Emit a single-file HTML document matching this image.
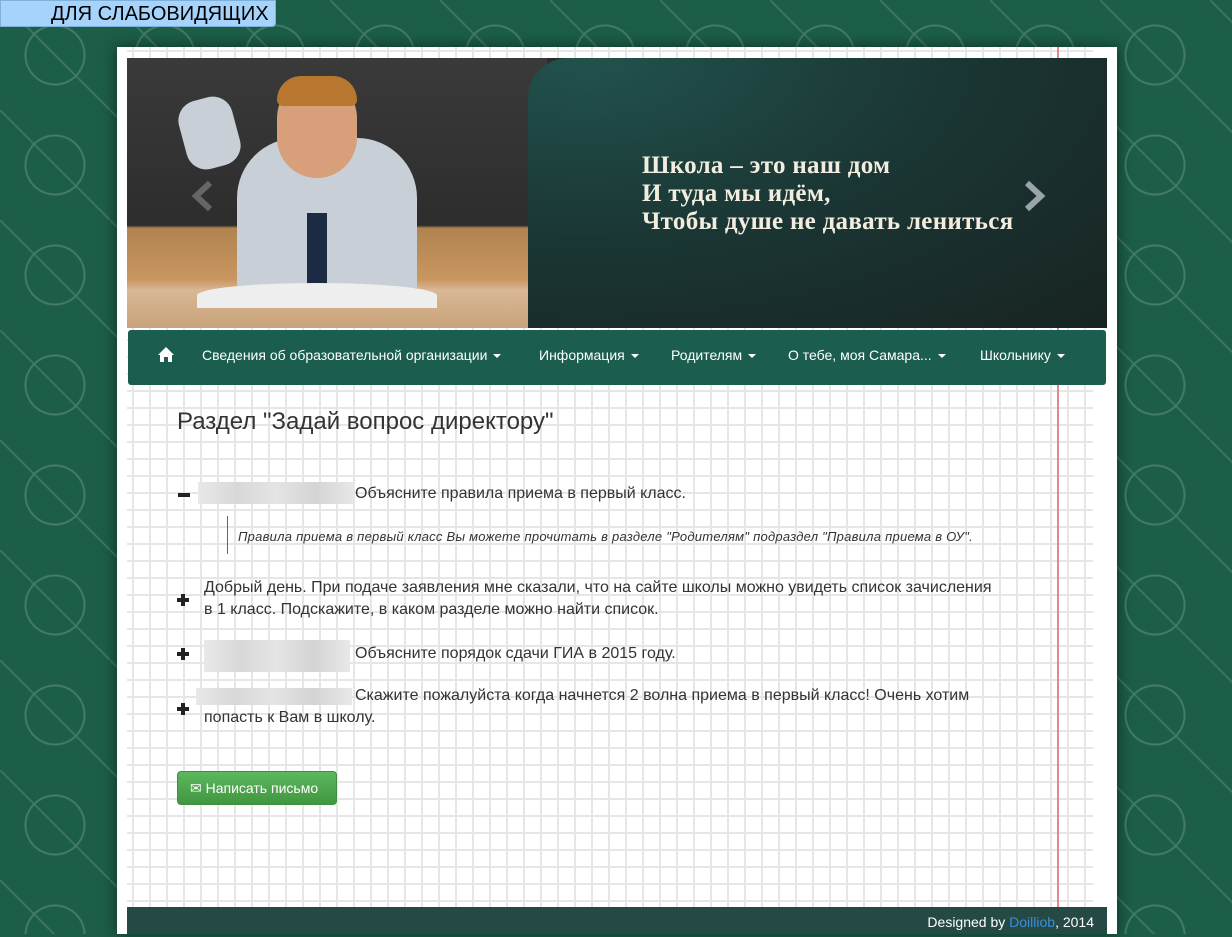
<!DOCTYPE html>
<html><head><meta charset="utf-8"><style>
*{box-sizing:border-box;margin:0;padding:0}
body{width:1232px;height:934px;overflow:hidden;position:relative;font-family:"Liberation Sans",sans-serif;
background:#1c5e48;}
.bgpat{position:absolute;inset:0;opacity:.18;
background-image:radial-gradient(circle at 50% 50%,transparent 28px,#fff 29px,#fff 30px,transparent 31px),linear-gradient(45deg,transparent 49%,#fff 50%,transparent 51%);
background-size:110px 110px,110px 110px;}
.blind{position:absolute;left:0;top:0;width:276px;height:27px;background:#a6d3fb;border:1px solid #7fb0d8;border-radius:0 0 4px 0;font-size:20px;color:#000;padding-left:50px;line-height:27px}
.panel{position:absolute;left:117px;top:47px;width:1000px;height:887px;background:#fff;box-shadow:0 0 14px rgba(0,0,0,.5)}
.grid{position:absolute;left:127px;top:47px;width:966px;height:887px;
background-color:#fff;
background-image:linear-gradient(#e6e6e6 2px,transparent 2px),linear-gradient(90deg,#e6e6e6 2px,transparent 2px);
background-size:17px 17px;background-position:5px 3px}
.redline{position:absolute;left:1057px;top:47px;width:2px;height:860px;background:#e08a8a}
.banner{position:absolute;left:127px;top:58px;width:980px;height:270px;overflow:hidden;background:#2b2b2b}
.photo{position:absolute;left:0;top:0;width:420px;height:270px;background:linear-gradient(#3a3a3a,#2d2d2d 62%,#b08350 63%,#c99660 82%,#d9b895 86%,#c8a27a)}
.right{position:absolute;left:401px;top:0;width:600px;height:270px;border-radius:40px 0 0 0;
background:radial-gradient(ellipse at 10% 0%,#22524d 0%,#1a3533 50%,#182322 100%)}
.poem{position:absolute;left:515px;top:94px;color:#f3ede0;font-family:"Liberation Serif",serif;font-weight:bold;font-size:25px;line-height:28px;letter-spacing:.3px}
.nav{position:absolute;left:128px;top:330px;width:978px;height:55px;background:#1b5e4f;border-radius:3px;color:#fff;font-size:14px}
.nav span{position:absolute;top:17px}
.car{display:inline-block;border-left:4px solid transparent;border-right:4px solid transparent;border-top:4px solid #fff;vertical-align:middle;margin-left:6px}
h1{position:absolute;left:177px;top:408px;font-weight:normal;font-size:24px;color:#333}
.t{position:absolute;font-size:16px;color:#333;line-height:22px}
.blur{position:absolute;background:linear-gradient(90deg,#e8e8e8,#d8d8d8,#e4e4e4,#d4d4d4,#e8e8e8)}
.pm{position:absolute;width:12px;height:12px}
.pm:before{content:"";position:absolute;left:0;top:4px;width:12px;height:4px;background:#222}
.pm.p:after{content:"";position:absolute;left:4px;top:0;width:4px;height:12px;background:#222}
.btn{position:absolute;left:177px;top:771px;width:160px;height:34px;background:linear-gradient(#5cb85c,#419641);border:1px solid #3e8f3e;border-radius:4px;color:#fff;font-size:14px;line-height:32px;padding-left:12px}
.foot{position:absolute;left:127px;top:907px;width:980px;height:27px;background:#254a46;color:#fff;font-size:14px;text-align:right;padding-right:13px;line-height:30px}
</style></head><body>
<div class="bgpat"></div>
<div class="blind">ДЛЯ СЛАБОВИДЯЩИХ</div>
<div class="panel"></div>
<div class="grid"></div>
<div class="redline"></div>
<div class="banner">
 <div class="photo">
  <div style="position:absolute;left:110px;top:80px;width:180px;height:150px;background:#c9cfd6;border-radius:60px 60px 0 0"></div>
  <div style="position:absolute;left:55px;top:40px;width:55px;height:70px;background:#c9cfd6;border-radius:20px;transform:rotate(-15deg)"></div>
  <div style="position:absolute;left:150px;top:20px;width:80px;height:100px;background:#d7a07a;border-radius:40px"></div>
  <div style="position:absolute;left:150px;top:18px;width:80px;height:30px;background:#b7772e;border-radius:40px 40px 10px 10px"></div>
  <div style="position:absolute;left:180px;top:155px;width:20px;height:75px;background:#1d2a44"></div>
  <div style="position:absolute;left:70px;top:225px;width:240px;height:25px;background:#eee;border-radius:50% 50% 0 0"></div>
 </div>
 <div class="right"></div>
 <div class="poem">Школа – это наш дом<br>И туда мы идём,<br>Чтобы душе не давать лениться</div>
 <svg style="position:absolute;left:897px;top:122px" width="22" height="32" viewBox="0 0 22 32"><path d="M3 3 L17 16 L3 29" fill="none" stroke="#9aa4ab" stroke-width="6"/></svg>
 <svg style="position:absolute;left:64px;top:122px" width="22" height="32" viewBox="0 0 22 32"><path d="M19 3 L5 16 L19 29" fill="none" stroke="#8a8a8a" stroke-width="6" opacity=".6"/></svg>
</div>
<div class="nav">
 <svg style="position:absolute;left:30px;top:17px" width="16" height="15" viewBox="0 0 16 15"><path d="M8 0 L16 8 L14 8 L14 15 L10 15 L10 10 L6 10 L6 15 L2 15 L2 8 L0 8 Z" fill="#fff"/></svg>
 <span style="left:74px">Сведения об образовательной организации<i class="car"></i></span>
 <span style="left:411px">Информация<i class="car"></i></span>
 <span style="left:543px">Родителям<i class="car"></i></span>
 <span style="left:660px">О тебе, моя Самара...<i class="car"></i></span>
 <span style="left:852px">Школьнику<i class="car"></i></span>
</div>
<h1>Раздел "Задай вопрос директору"</h1>
<div class="pm" style="left:178px;top:489px"></div>
<div class="blur" style="left:198px;top:482px;width:157px;height:22px"></div>
<div class="t" style="left:355px;top:483px">Объясните правила приема в первый класс.</div>
<div style="position:absolute;left:227px;top:516px;width:1px;height:38px;background:#666"></div>
<div class="t" style="left:238px;top:526px;font-size:13px;font-style:italic;letter-spacing:.25px">Правила приема в первый класс Вы можете прочитать в разделе "Родителям" подраздел "Правила приема в ОУ".</div>
<div class="pm p" style="left:177px;top:594px"></div>
<div class="t" style="left:204px;top:577px">Добрый день. При подаче заявления мне сказали, что на сайте школы можно увидеть список зачисления<br>в 1 класс. Подскажите, в каком разделе можно найти список.</div>
<div class="pm p" style="left:177px;top:648px"></div>
<div class="blur" style="left:204px;top:640px;width:146px;height:32px"></div>
<div class="t" style="left:355px;top:643px">Объясните порядок сдачи ГИА в 2015 году.</div>
<div class="pm p" style="left:177px;top:703px"></div>
<div class="blur" style="left:196px;top:688px;width:156px;height:17px"></div>
<div class="t" style="left:355px;top:685px">Скажите пожалуйста когда начнется 2 волна приема в первый класс! Очень хотим</div>
<div class="t" style="left:204px;top:707px">попасть к Вам в школу.</div>
<div class="btn">&#x2709; Написать письмо</div>
<div class="foot">Designed by <span style="color:#3a8fd8">Doilliob</span>, 2014</div>
</body></html>
